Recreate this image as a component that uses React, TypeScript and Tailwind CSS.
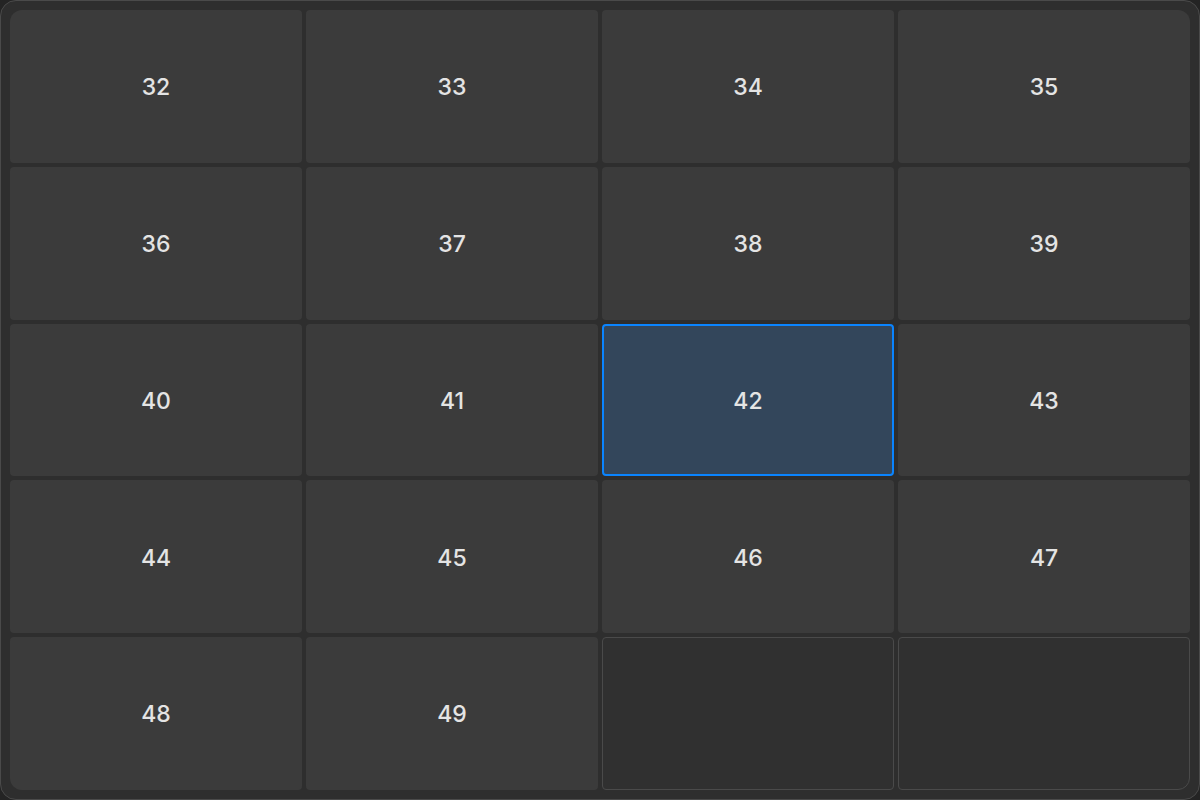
const cells: (number | null)[] = [
  32, 33, 34, 35,
  36, 37, 38, 39,
  40, 41, 42, 43,
  44, 45, 46, 47,
  48, 49, null, null,
];

const cornerClass = (i: number) => {
  if (i === 0) return 'rounded-tl-[12px]';
  if (i === 3) return 'rounded-tr-[12px]';
  if (i === 16) return 'rounded-bl-[12px]';
  if (i === 19) return 'rounded-br-[12px]';
  return '';
};

export default function App() {
  const selected = 42;

  return (
    <div className="h-screen w-full bg-[#242424]">
      <div className="h-full w-full rounded-[16px] border border-[#4a4a4a] bg-[#2e2e2e] p-[9px]">
        <div className="grid h-full grid-cols-4 grid-rows-5 gap-1">
          {cells.map((n, i) => {
            if (n === null) {
              return (
                <div
                  key={i}
                  className={`rounded-[4px] border border-[#4a4a4a] bg-[#303030] ${cornerClass(i)}`}
                />
              );
            }
            const isSel = n === selected;
            return (
              <button
                key={i}
                type="button"
                className={`flex items-center justify-center rounded-[4px] pt-[2px] text-[23px] font-medium text-[#e4e4e4] ${
                  isSel
                    ? 'border-2 border-[#0a84ff] bg-[#33465b]'
                    : 'bg-[#3b3b3b]'
                } ${cornerClass(i)}`}
                style={{ fontFamily: 'Inter, "Liberation Sans", sans-serif' }}
              >
                {n}
              </button>
            );
          })}
        </div>
      </div>
    </div>
  );
}
